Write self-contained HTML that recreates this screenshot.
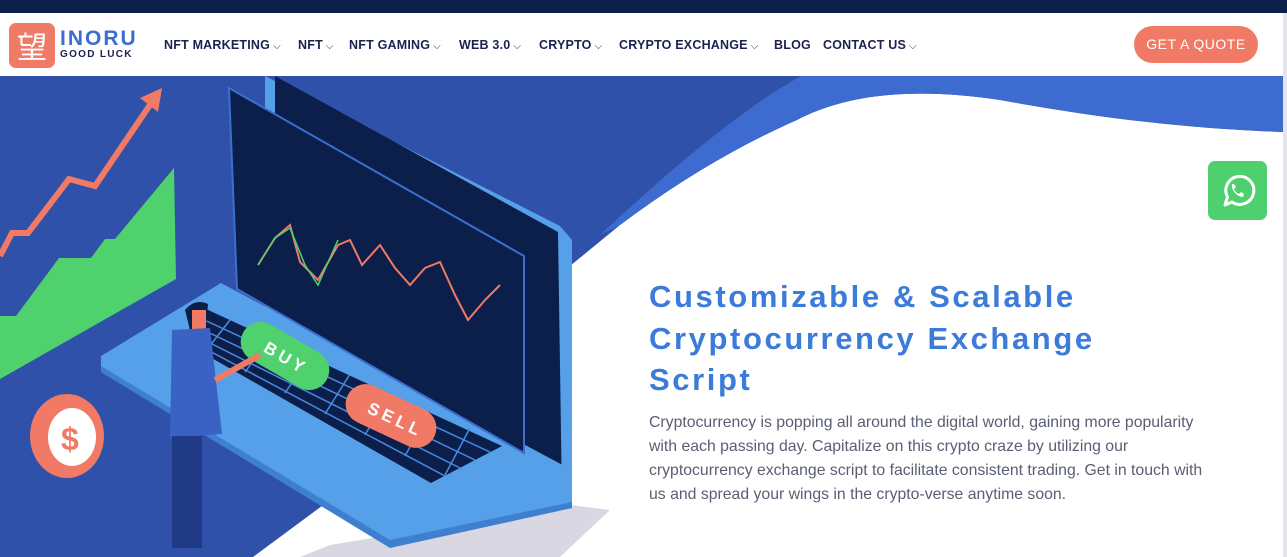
<!DOCTYPE html>
<html><head><meta charset="utf-8"><style>
*{margin:0;padding:0;box-sizing:border-box}
body{width:1287px;height:557px;overflow:hidden;position:relative;background:#fff;font-family:"Liberation Sans",sans-serif}
.top{position:absolute;left:0;top:0;width:1287px;height:13px;background:#0c1f4a}
.nav{position:absolute;top:38px;font-size:12.5px;font-weight:bold;color:#1c2150;letter-spacing:.2px;white-space:nowrap}
.nav i{font-style:normal;font-weight:normal;font-size:10px;margin-left:3px}
.btn{position:absolute;left:1134px;top:26px;width:124px;height:37px;border-radius:19px;background:#f07a65;color:#fff;font-size:14px;text-align:center;line-height:37px;letter-spacing:.5px}
h1{position:absolute;left:649px;top:276px;font-size:31px;line-height:41.5px;font-weight:bold;color:#3b7bd9;letter-spacing:2.6px}
p{position:absolute;left:649px;top:411px;font-size:15.8px;line-height:24px;color:#5a5e72;white-space:nowrap}
.wa{position:absolute;left:1208px;top:161px;width:59px;height:59px;background:#4fd06e;border-radius:7px}
</style></head><body>
<div class="top"></div>
<div style="position:absolute;left:9px;top:23px;width:46px;height:45px;background:#f07a65;border-radius:7px;color:#fff;font-family:'Noto Sans CJK JP',sans-serif;font-size:30px;line-height:45px;text-align:center">望</div>
<div style="position:absolute;left:60px;top:27px;font-size:21px;font-weight:bold;color:#3a6fd0;letter-spacing:2px">INORU</div>
<div style="position:absolute;left:60px;top:49px;font-size:10px;font-weight:bold;color:#1c2150;letter-spacing:1.3px">GOOD LUCK</div>
<div class="nav" style="left:164px">NFT MARKETING<i>⌵</i></div>
<div class="nav" style="left:298px">NFT<i>⌵</i></div>
<div class="nav" style="left:349px">NFT GAMING<i>⌵</i></div>
<div class="nav" style="left:459px">WEB 3.0<i>⌵</i></div>
<div class="nav" style="left:539px">CRYPTO<i>⌵</i></div>
<div class="nav" style="left:619px">CRYPTO EXCHANGE<i>⌵</i></div>
<div class="nav" style="left:774px">BLOG</div>
<div class="nav" style="left:823px">CONTACT US<i>⌵</i></div>
<div class="btn">GET A QUOTE</div>

<svg style="position:absolute;left:0;top:76px" width="1287" height="481" viewBox="0 76 1287 481">
<path d="M0 76 H1283 V132 C1180 128 1100 118 1000 100 C920 88 850 92 797 120 C740 145 680 180 620 225 L570 266 L420 420 L330 500 L253 557 H0 Z" fill="#3051a9"/>
<path d="M801 76 H1283 V132 C1180 128 1100 118 1000 100 C920 88 850 92 797 120 C740 145 680 180 620 225 L600 235 C670 170 740 110 801 76Z" fill="#3e6bcf"/>
<path d="M330 545 L570 505 L610 510 L560 557 H300Z" fill="#c9c6d6" opacity=".7"/>
<polygon points="0,316 16,316 59,258 91,258 105,239 115,239 174,168 176,279 0,379" fill="#4fd16e"/>
<polyline points="0,256 12,233 28,233 69,179 95,186 154,99" fill="none" stroke="#f07a65" stroke-width="6"/>
<polygon points="162,88 140,98 158,112" fill="#f07a65"/>
<ellipse cx="67" cy="436" rx="37" ry="42" fill="#f07a65"/>
<ellipse cx="72" cy="437" rx="24" ry="29" fill="#fff"/>
<text x="61" y="450" font-size="32" font-weight="bold" fill="#f07a65" font-family="Liberation Sans">$</text>
<polygon points="265,76 560,226 572,240 572,505 265,330" fill="#55a0e8"/>
<polygon points="275,76 558,232 562,500 275,340" fill="#0c1f4a"/>
<polygon points="101,356 221,283 572,470 572,508 390,546 101,372" fill="#55a0e8"/>
<polygon points="101,366 390,540 572,502 572,508 390,548 101,372" fill="#3f7fd0"/>
<polygon points="229,88 524,256 524,453 237,289" fill="#0c1f4a" stroke="#3a6fd0" stroke-width="2"/>
<polyline points="258,265 275,238 290,225 300,262 318,280 338,245 350,240 362,265 380,245 395,268 410,285 425,268 440,262 455,295 468,320 485,300 500,285" fill="none" stroke="#f07a65" stroke-width="2"/>
<polyline points="258,265 275,238 290,228 305,265 318,285 338,240" fill="none" stroke="#4fd16e" stroke-width="1.5"/>
<polygon points="206,309 502,446 431,483 180,340" fill="#0c1f4a"/>
<g stroke="#4a8ae0" stroke-width="1.5">
<line x1="200" y1="318" x2="490" y2="452"/><line x1="195" y1="326" x2="475" y2="460"/><line x1="190" y1="333" x2="460" y2="468"/><line x1="185" y1="338" x2="445" y2="476"/>
<line x1="230" y1="320" x2="205" y2="352"/><line x1="270" y1="338" x2="245" y2="372"/><line x1="310" y1="356" x2="285" y2="393"/><line x1="350" y1="374" x2="325" y2="414"/><line x1="390" y1="392" x2="365" y2="435"/><line x1="430" y1="410" x2="405" y2="456"/><line x1="470" y1="428" x2="445" y2="475"/>
</g>
<g transform="translate(285,356) rotate(30)"><rect x="-48" y="-20" width="96" height="40" rx="20" fill="#4fd16e"/><text x="-22" y="7" font-size="17" font-weight="bold" fill="#fff" font-family="Liberation Sans" letter-spacing="4">BUY</text></g>
<g transform="translate(391,416) rotate(25)"><rect x="-48" y="-20" width="96" height="40" rx="20" fill="#f07a65"/><text x="-24" y="7" font-size="17" font-weight="bold" fill="#fff" font-family="Liberation Sans" letter-spacing="4">SELL</text></g>
<path d="M185 310 Q195 298 208 304 L206 328 L190 330Z" fill="#0c1f4a"/>
<rect x="192" y="310" width="14" height="22" fill="#f07a65"/>
<path d="M172 330 L210 328 L222 434 L170 438Z" fill="#3a62c4"/>
<line x1="215" y1="380" x2="260" y2="355" stroke="#f07a65" stroke-width="6"/>
<rect x="172" y="436" width="30" height="112" fill="#213a86"/>
</svg>

<h1>Customizable &amp; Scalable<br>Cryptocurrency Exchange<br>Script</h1>
<p>Cryptocurrency is popping all around the digital world, gaining more popularity<br>with each passing day. Capitalize on this crypto craze by utilizing our<br>cryptocurrency exchange script to facilitate consistent trading. Get in touch with<br>us and spread your wings in the crypto-verse anytime soon.</p>

<div class="wa"><svg width="59" height="59" viewBox="0 0 59 59"><path d="M17 44 L19.5 36 A14 14 0 1 1 24 41 Z" fill="none" stroke="#fff" stroke-width="3" stroke-linejoin="round"/><path d="M24 23 Q23 27 27 32 Q31 36 35 36 L36 33 L33 31 L31 33 Q27 31 26 28 L28 26 L26 23Z" fill="#fff"/></svg></div>
<div style="position:absolute;left:1283px;top:13px;width:4px;height:544px;background:#e4e4ea"></div>
</body></html>
